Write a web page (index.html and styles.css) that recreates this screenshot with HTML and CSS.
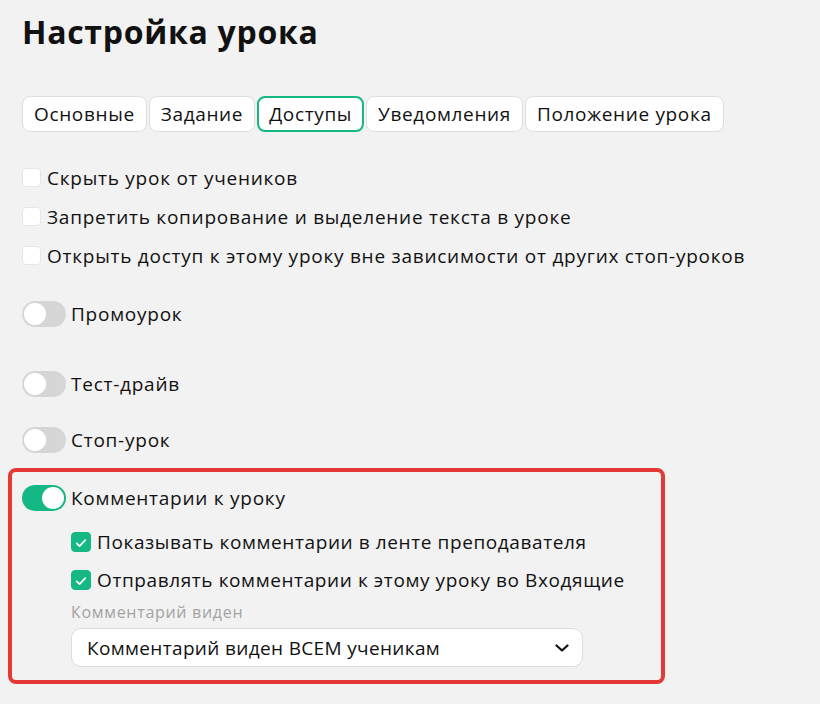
FILE: index.html
```html
<!DOCTYPE html>
<html lang="ru">
<head>
<meta charset="utf-8">
<link rel="stylesheet" href="styles.css">
</head>
<body>
<div class="page">
  <h1 class="title">Настройка урока</h1>
  <div class="tabs">
    <div class="tab">Основные</div>
    <div class="tab">Задание</div>
    <div class="tab active">Доступы</div>
    <div class="tab">Уведомления</div>
    <div class="tab">Положение урока</div>
  </div>
  <div class="checks">
    <label class="check"><span class="box"></span><span>Скрыть урок от учеников</span></label>
    <label class="check"><span class="box"></span><span>Запретить копирование и выделение текста в уроке</span></label>
    <label class="check"><span class="box"></span><span>Открыть доступ к этому уроку вне зависимости от других стоп-уроков</span></label>
  </div>
  <div class="toggle-row promo"><span class="toggle"><span class="knob"></span></span><span>Промоурок</span></div>
  <div class="toggle-row test"><span class="toggle"><span class="knob"></span></span><span>Тест-драйв</span></div>
  <div class="toggle-row stop"><span class="toggle"><span class="knob"></span></span><span>Стоп-урок</span></div>
  <div class="highlight">
    <div class="toggle-row"><span class="toggle on"><span class="knob"></span></span><span>Комментарии к уроку</span></div>
    <div class="sub">
      <label class="check"><span class="box checked"><svg viewBox="0 0 20 20" width="20" height="20"><path d="M5.2 10.4l3.2 3.1 6.3-6.6" fill="none" stroke="#fff" stroke-width="1.9" stroke-linecap="round" stroke-linejoin="round"/></svg></span><span>Показывать комментарии в ленте преподавателя</span></label>
      <label class="check"><span class="box checked"><svg viewBox="0 0 20 20" width="20" height="20"><path d="M5.2 10.4l3.2 3.1 6.3-6.6" fill="none" stroke="#fff" stroke-width="1.9" stroke-linecap="round" stroke-linejoin="round"/></svg></span><span>Отправлять комментарии к этому уроку во Входящие</span></label>
      <div class="field-label">Комментарий виден</div>
      <div class="select"><span class="select-text">Комментарий виден ВСЕМ ученикам</span><svg width="14" height="8" viewBox="0 0 14 8"><path d="M1.5 1.5l5.5 5 5.5-5" fill="none" stroke="#111" stroke-width="2.2" stroke-linecap="round" stroke-linejoin="round"/></svg></div>
    </div>
  </div>
</div>
</body>
</html>
```
FILE: styles.css
```css
* { box-sizing: border-box; }
html, body { margin: 0; padding: 0; }
body {
  background: #f2f2f2;
  font-family: "Open Sans", "Noto Sans", sans-serif;
  color: #111;
  font-size: 19px;
  letter-spacing: 0.75px;
  width: 820px;
  height: 704px;
  overflow: hidden;
}
.page { padding: 12px 0 0 22px; }
.title {
  margin: 0;
  font-size: 32px;
  font-weight: 700;
  line-height: 40px;
  letter-spacing: 0.7px;
}
.tabs { display: flex; gap: 2px; margin-top: 44px; letter-spacing: 0.65px; }
.tab {
  height: 36px;
  padding: 0 11px;
  display: flex;
  align-items: center;
  background: #fff;
  border: 1px solid #dedede;
  border-radius: 8px;
}
.tab.active { border: 2px solid #14b884; padding: 0 10px; }
.checks { margin-top: 33px; display: flex; flex-direction: column; gap: 14px; }
.check { display: flex; align-items: center; gap: 6px; height: 25px; }
.box {
  width: 19px; height: 19px;
  background: #fff;
  border: 1px solid #e6e6e6;
  border-radius: 4px;
  flex: none;
  display: flex;
}
.box.checked { background: #14b884; border-color: #14b884; width: 20px; height: 20px; }
.toggle-row { display: flex; align-items: center; gap: 5px; height: 26px; }
.promo { margin-top: 33px; }
.test { margin-top: 44px; }
.stop { margin-top: 30px; }
.toggle {
  width: 44px; height: 26px;
  border-radius: 13px;
  background: #d6d6d6;
  position: relative;
  flex: none;
}
.knob {
  position: absolute;
  top: 2px; left: 2px;
  width: 22px; height: 22px;
  border-radius: 50%;
  background: #fff;
}
.toggle.on { background: #14b884; }
.toggle.on .knob { left: 20px; }
.highlight {
  margin: 15px 0 0 -14px;
  width: 657px;
  height: 216px;
  border: 4px solid #e53935;
  border-radius: 8px;
  padding: 13px 0 0 10px;
}
.sub { padding-left: 49px; margin-top: 18px; display: flex; flex-direction: column; gap: 13px; }
.sub .check { letter-spacing: 0.6px; }
.field-label { color: #a3a3a3; font-size: 16px; margin-top: -3px; line-height: 20px; letter-spacing: 0.7px; }
.select {
  margin-top: -7px;
  width: 512px; height: 39px;
  background: #fff;
  border: 1px solid #dcdcdc;
  border-radius: 10px;
  display: flex; align-items: center; justify-content: space-between;
  padding: 0 13px 0 15px;
}
.select-text { letter-spacing: 0.35px; }
```
